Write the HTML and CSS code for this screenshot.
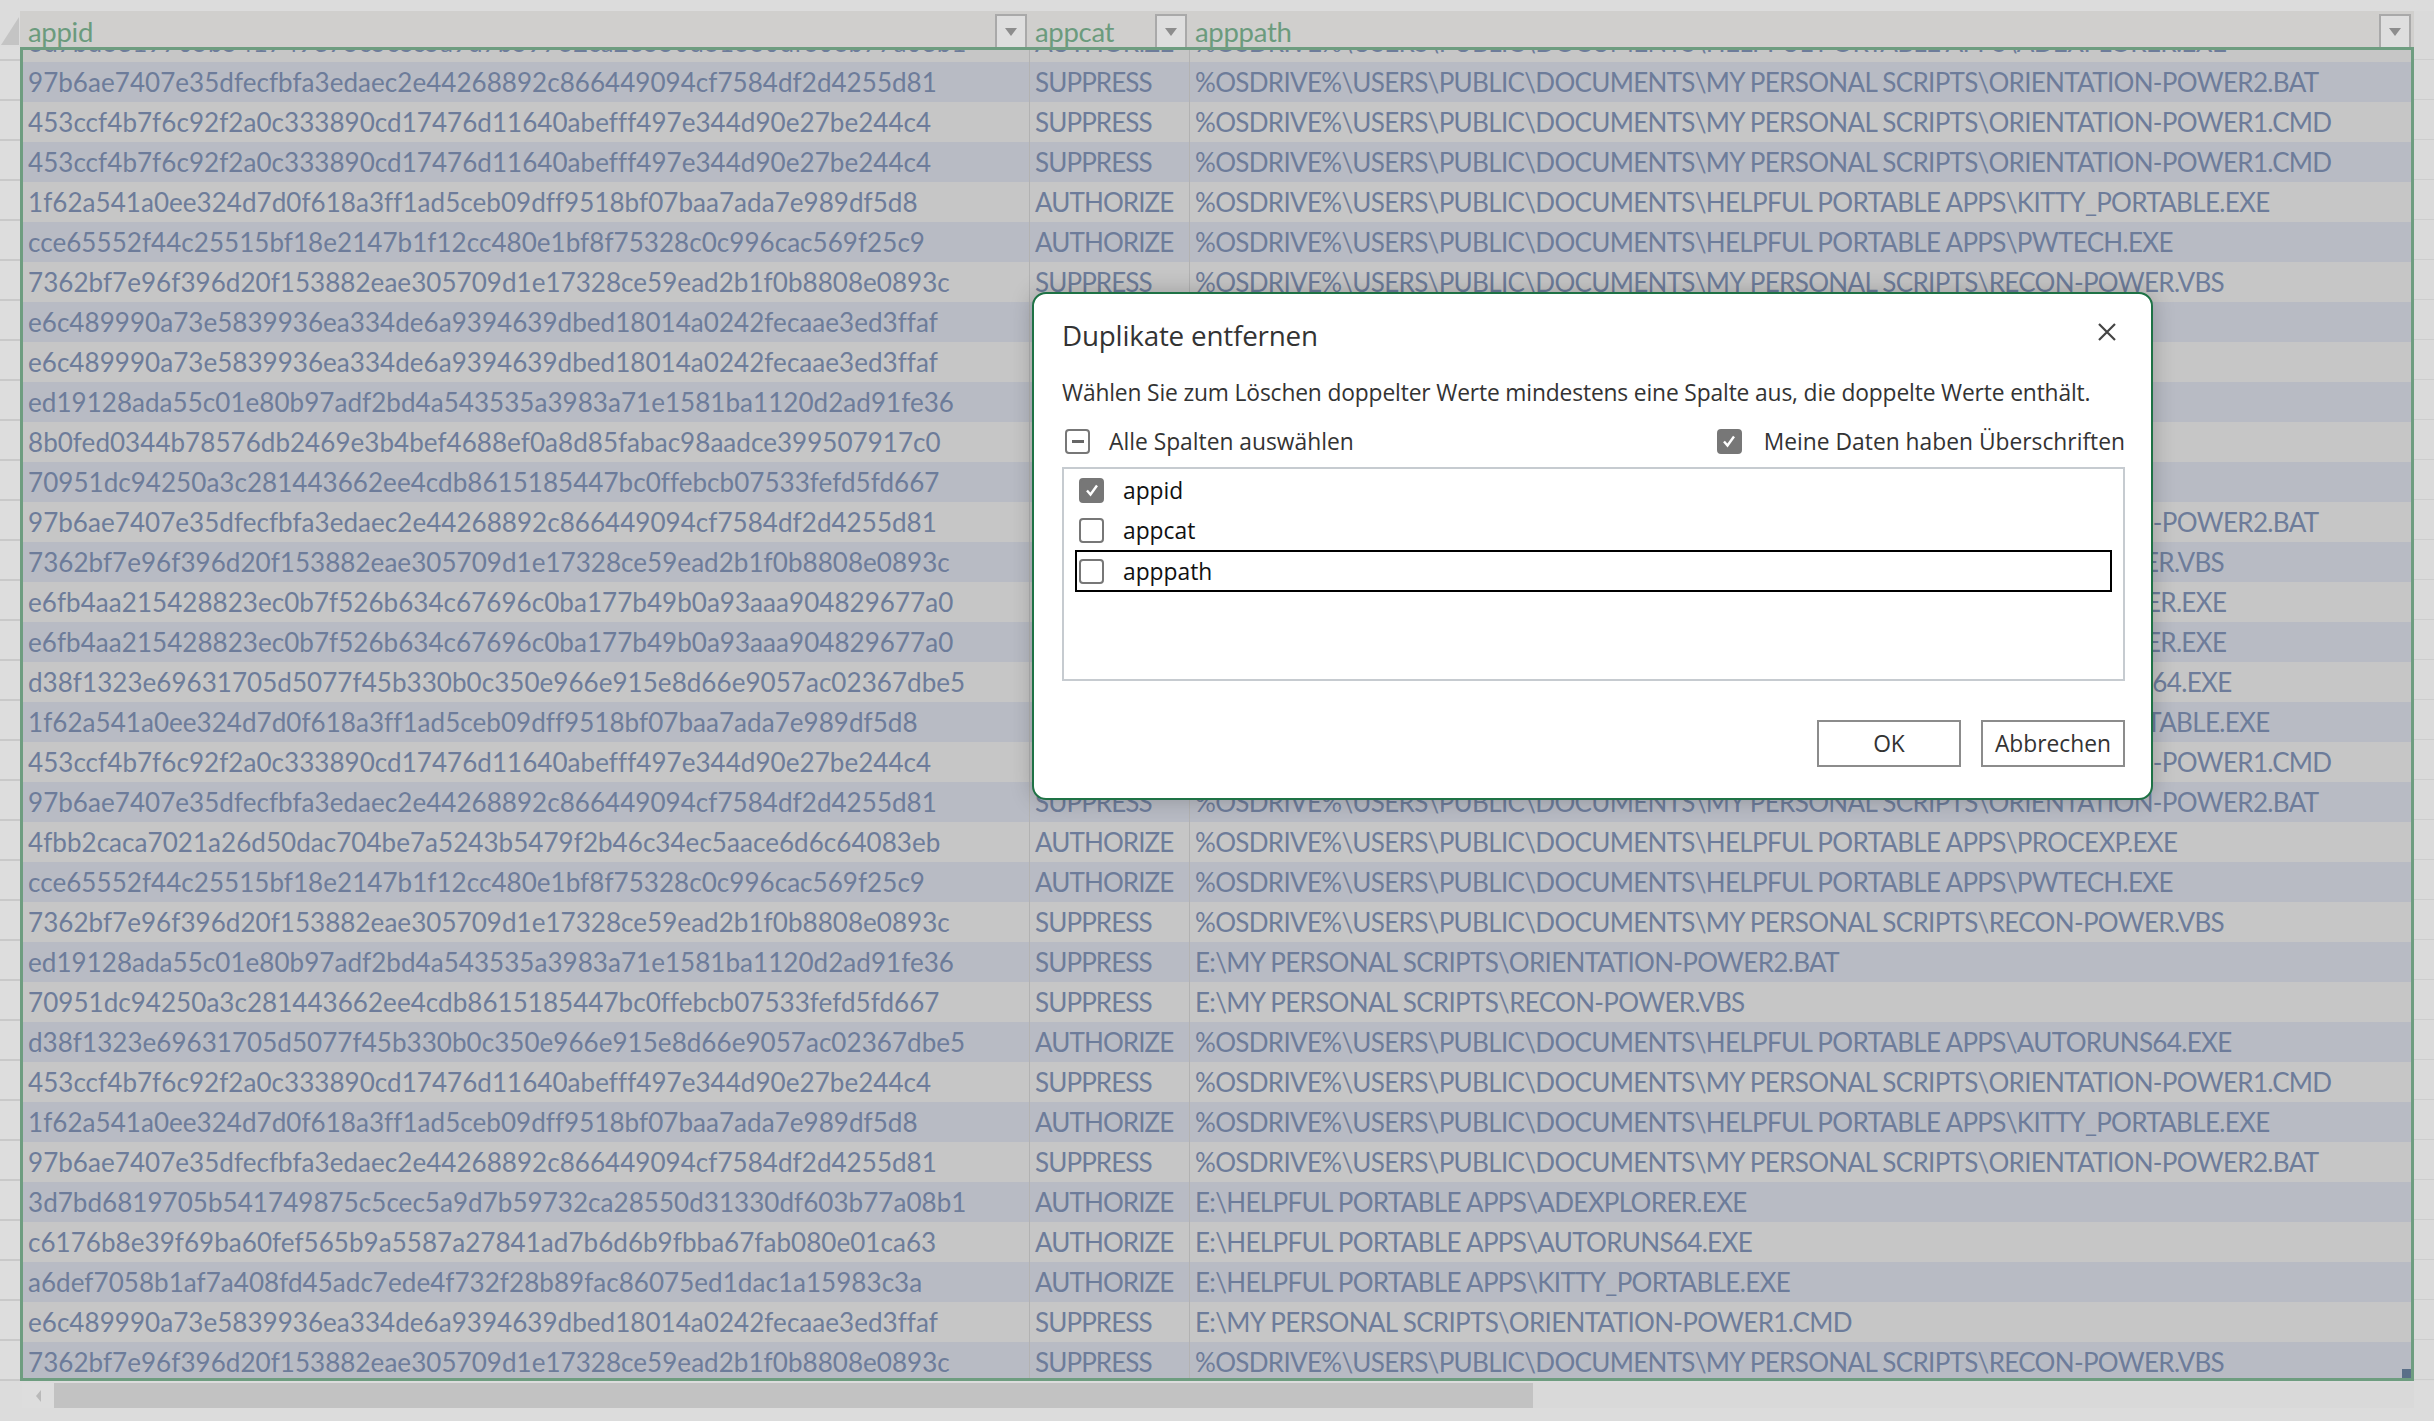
FILE: index.html
```html
<!DOCTYPE html>
<html lang="de">
<head>
<meta charset="utf-8">
<title>Duplikate entfernen</title>
<link rel="stylesheet" href="styles.css">
</head>
<body>
<div class="app">
  <div class="topstrip"></div>
  <div class="sheet">
    <div class="gutter">
      <div class="corner"><div class="corner-tri"></div></div>
      <div class="rowheads" id="rowheads"></div>
    </div>
    <div class="table">
      <div class="thead">
        <div class="th col-id"><span class="th-label">appid</span><span class="filter"><span class="tri"></span></span></div>
        <div class="th col-cat"><span class="th-label">appcat</span><span class="filter"><span class="tri"></span></span></div>
        <div class="th col-path"><span class="th-label">apppath</span><span class="filter"><span class="tri"></span></span></div>
      </div>
      <div class="tbody">
        <div class="rows" id="rows"></div>
        <div class="handle"></div>
      </div>
    </div>
    <div class="rightpad" id="rightpad"></div>
  </div>
  <div class="hscroll">
    <div class="hs-arrow"></div>
    <div class="hs-track"><div class="hs-thumb"></div></div>
  </div>

  <div class="dialog" role="dialog">
    <div class="dlg-head">
      <div class="dlg-title">Duplikate entfernen</div>
      <div class="dlg-close">
        <svg width="20" height="20" viewBox="0 0 20 20"><path d="M2 2 L18 18 M18 2 L2 18" stroke="#444" stroke-width="2.2" fill="none"/></svg>
      </div>
    </div>
    <div class="dlg-text">Wählen Sie zum Löschen doppelter Werte mindestens eine Spalte aus, die doppelte Werte enthält.</div>
    <div class="dlg-opts">
      <label class="opt"><span class="cb cb-ind"><span class="minus"></span></span><span>Alle Spalten auswählen</span></label>
      <label class="opt opt-right"><span class="cb cb-on"><svg width="16" height="16" viewBox="0 0 16 16"><path d="M3 8.5 L6.5 12.5 L13 3.5" stroke="#fff" stroke-width="2.4" fill="none"/></svg></span><span>Meine Daten haben Überschriften</span></label>
    </div>
    <div class="dlg-list">
      <div class="item"><span class="cb cb-on"><svg width="16" height="16" viewBox="0 0 16 16"><path d="M3 8.5 L6.5 12.5 L13 3.5" stroke="#fff" stroke-width="2.4" fill="none"/></svg></span><span>appid</span></div>
      <div class="item"><span class="cb"></span><span>appcat</span></div>
      <div class="item focus"><span class="cb"></span><span>apppath</span></div>
    </div>
    <div class="dlg-buttons">
      <button class="btn">OK</button>
      <button class="btn">Abbrechen</button>
    </div>
  </div>
</div>
<script>
const P = "%OSDRIVE%\\USERS\\PUBLIC\\DOCUMENTS\\";
const MPS = P + "MY PERSONAL SCRIPTS\\";
const HPA = P + "HELPFUL PORTABLE APPS\\";
const H = {
  a97: "97b6ae7407e35dfecfbfa3edaec2e44268892c866449094cf7584df2d4255d81",
  a453: "453ccf4b7f6c92f2a0c333890cd17476d11640abefff497e344d90e27be244c4",
  a1f6: "1f62a541a0ee324d7d0f618a3ff1ad5ceb09dff9518bf07baa7ada7e989df5d8",
  acce: "cce65552f44c25515bf18e2147b1f12cc480e1bf8f75328c0c996cac569f25c9",
  a736: "7362bf7e96f396d20f153882eae305709d1e17328ce59ead2b1f0b8808e0893c",
  ae6c: "e6c489990a73e5839936ea334de6a9394639dbed18014a0242fecaae3ed3ffaf",
  aed1: "ed19128ada55c01e80b97adf2bd4a543535a3983a71e1581ba1120d2ad91fe36",
  a8b0: "8b0fed0344b78576db2469e3b4bef4688ef0a8d85fabac98aadce399507917c0",
  a709: "70951dc94250a3c281443662ee4cdb8615185447bc0ffebcb07533fefd5fd667",
  ae6f: "e6fb4aa215428823ec0b7f526b634c67696c0ba177b49b0a93aaa904829677a0",
  ad38: "d38f1323e69631705d5077f45b330b0c350e966e915e8d66e9057ac02367dbe5",
  a4fb: "4fbb2caca7021a26d50dac704be7a5243b5479f2b46c34ec5aace6d6c64083eb",
  a3d7: "3d7bd6819705b541749875c5cec5a9d7b59732ca28550d31330df603b77a08b1",
  ac61: "c6176b8e39f69ba60fef565b9a5587a27841ad7b6d6b9fbba67fab080e01ca63",
  aa6d: "a6def7058b1af7a408fd45adc7ede4f732f28b89fac86075ed1dac1a15983c3a"
};
const rows = [
  [H.a3d7, "AUTHORIZE", HPA + "ADEXPLORER.EXE"],
  [H.a97, "SUPPRESS", MPS + "ORIENTATION-POWER2.BAT"],
  [H.a453, "SUPPRESS", MPS + "ORIENTATION-POWER1.CMD"],
  [H.a453, "SUPPRESS", MPS + "ORIENTATION-POWER1.CMD"],
  [H.a1f6, "AUTHORIZE", HPA + "KITTY_PORTABLE.EXE"],
  [H.acce, "AUTHORIZE", HPA + "PWTECH.EXE"],
  [H.a736, "SUPPRESS", MPS + "RECON-POWER.VBS"],
  [H.ae6c, "SUPPRESS", "E:\\MY PERSONAL SCRIPTS\\ORIENTATION-POWER1.CMD"],
  [H.ae6c, "SUPPRESS", "E:\\MY PERSONAL SCRIPTS\\ORIENTATION-POWER1.CMD"],
  [H.aed1, "SUPPRESS", "E:\\MY PERSONAL SCRIPTS\\ORIENTATION-POWER2.BAT"],
  [H.a8b0, "AUTHORIZE", "E:\\HELPFUL PORTABLE APPS\\PROCEXP.EXE"],
  [H.a709, "SUPPRESS", "E:\\MY PERSONAL SCRIPTS\\RECON-POWER.VBS"],
  [H.a97, "SUPPRESS", MPS + "ORIENTATION-POWER2.BAT"],
  [H.a736, "SUPPRESS", MPS + "RECON-POWER.VBS"],
  [H.ae6f, "AUTHORIZE", HPA + "ADEXPLORER.EXE"],
  [H.ae6f, "AUTHORIZE", HPA + "ADEXPLORER.EXE"],
  [H.ad38, "AUTHORIZE", HPA + "AUTORUNS64.EXE"],
  [H.a1f6, "AUTHORIZE", HPA + "KITTY_PORTABLE.EXE"],
  [H.a453, "SUPPRESS", MPS + "ORIENTATION-POWER1.CMD"],
  [H.a97, "SUPPRESS", MPS + "ORIENTATION-POWER2.BAT"],
  [H.a4fb, "AUTHORIZE", HPA + "PROCEXP.EXE"],
  [H.acce, "AUTHORIZE", HPA + "PWTECH.EXE"],
  [H.a736, "SUPPRESS", MPS + "RECON-POWER.VBS"],
  [H.aed1, "SUPPRESS", "E:\\MY PERSONAL SCRIPTS\\ORIENTATION-POWER2.BAT"],
  [H.a709, "SUPPRESS", "E:\\MY PERSONAL SCRIPTS\\RECON-POWER.VBS"],
  [H.ad38, "AUTHORIZE", HPA + "AUTORUNS64.EXE"],
  [H.a453, "SUPPRESS", MPS + "ORIENTATION-POWER1.CMD"],
  [H.a1f6, "AUTHORIZE", HPA + "KITTY_PORTABLE.EXE"],
  [H.a97, "SUPPRESS", MPS + "ORIENTATION-POWER2.BAT"],
  [H.a3d7, "AUTHORIZE", "E:\\HELPFUL PORTABLE APPS\\ADEXPLORER.EXE"],
  [H.ac61, "AUTHORIZE", "E:\\HELPFUL PORTABLE APPS\\AUTORUNS64.EXE"],
  [H.aa6d, "AUTHORIZE", "E:\\HELPFUL PORTABLE APPS\\KITTY_PORTABLE.EXE"],
  [H.ae6c, "SUPPRESS", "E:\\MY PERSONAL SCRIPTS\\ORIENTATION-POWER1.CMD"],
  [H.a736, "SUPPRESS", MPS + "RECON-POWER.VBS"]
];
const rc = document.getElementById("rows");
const rh = document.getElementById("rowheads");
const rp = document.getElementById("rightpad");
rows.forEach((r, i) => {
  const d = document.createElement("div");
  d.className = "row " + (i % 2 ? "band" : "plain");
  r.forEach((t, j) => {
    const c = document.createElement("div");
    c.className = "td " + ["col-id", "col-cat", "col-path"][j];
    c.textContent = t;
    d.appendChild(c);
  });
  rc.appendChild(d);
  const h = document.createElement("div");
  h.className = "rh";
  rh.appendChild(h);
  const p = document.createElement("div");
  p.className = "rp";
  rp.appendChild(p);
});
</script>
</body>
</html>
```
FILE: styles.css
```css
* { box-sizing: border-box; }
html, body { margin: 0; padding: 0; }
body {
  width: 2434px;
  height: 1421px;
  overflow: hidden;
  background: #dcdcdc;
  font-family: "Lato", "Liberation Sans", sans-serif;
}
.app {
  position: relative;
  width: 2434px;
  height: 1421px;
  display: flex;
  flex-direction: column;
}
.topstrip { height: 11px; background: #dcdcdc; flex: none; }

.sheet {
  height: 1370px;
  flex: none;
  display: flex;
  overflow: hidden;
}
.gutter {
  width: 20px;
  flex: none;
  display: flex;
  flex-direction: column;
  background: #dddddd;
}
.corner {
  height: 36px;
  flex: none;
  position: relative;
  background: #dcdcdc;
}
.corner-tri {
  position: absolute;
  right: 1px;
  bottom: 2px;
  width: 0; height: 0;
  border-left: 18px solid transparent;
  border-bottom: 28px solid #c4c4c4;
}
.rowheads { overflow: hidden; flex: 1; display: flex; flex-direction: column; padding-top: 1px; }
.rowheads .rh { height: 40px; flex: none; border-bottom: 2px solid #c9c9c9; }
.rowheads .rh:first-child { height: 13px; }

.table {
  width: 2394px;
  flex: none;
  display: flex;
  flex-direction: column;
}
.thead {
  height: 36px;
  flex: none;
  display: flex;
  background: #d0cfcd;
  padding-left: 3px;
  padding-right: 3px;
  overflow: hidden;
}
.th {
  display: flex;
  align-items: flex-end;
  justify-content: space-between;
  font-size: 27.5px;
  color: #6b9b7d;
  padding-left: 5px;
  padding-right: 2px;
}
.th.col-cat, .th.col-path { border-left: 1px solid transparent; padding-left: 5px; }
.th.col-path { padding-right: 0; }
.th-label { line-height: 30px; letter-spacing: -0.3px; }
.filter {
  width: 32px;
  height: 33px;
  background: #dedede;
  border: 2px solid #a9a9a9;
  border-bottom: none;
  display: flex;
  align-items: center;
  justify-content: center;
  flex: none;
}
.tri {
  width: 0; height: 0;
  border-left: 6px solid transparent;
  border-right: 6px solid transparent;
  border-top: 8px solid #8d8d8d;
}
.col-id { width: 1006px; flex: none; }
.col-cat { width: 160px; flex: none; }
.col-path { flex: 1; min-width: 0; }

.tbody {
  position: relative;
  flex: 1;
  border: 3px solid #6e9d80;
  overflow: hidden;
  background: #c6c6c6;
}
.rows {
  display: flex;
  flex-direction: column;
  margin-top: -28px;
}
.row {
  height: 40px;
  flex: none;
  display: flex;
  font-size: 26px;
  color: #6d7c9a;
  line-height: 40px;
}
.row.plain { background: #c6c6c6; }
.row.band { background: #b8bbc4; }
.td {
  white-space: nowrap;
  overflow: hidden;
  padding-left: 5px;
  padding-top: 0;
  letter-spacing: 0.05px;
}
.td.col-cat, .td.col-path { border-left: 1px solid #b2b2b2; }
.td.col-path { letter-spacing: -0.67px; }
.td.col-cat { letter-spacing: -0.9px; }
.handle {
  position: absolute;
  right: 0;
  bottom: 0;
  width: 9px;
  height: 9px;
  background: #5a6f88;
}

.rightpad {
  flex: 1;
  display: flex;
  flex-direction: column;
  background: #dadada;
  padding-top: 36px;
}
.rightpad .rp { height: 40px; flex: none; border-bottom: 1px solid #cdcdcd; }
.rightpad .rp:first-child { height: 13px; }

.hscroll {
  flex: none;
  height: 40px;
  display: flex;
  padding-top: 2px;
  padding-left: 22px;
  background: #dcdcdc;
}
.hs-arrow {
  width: 32px;
  height: 25px;
  display: flex;
  align-items: center;
  justify-content: center;
  background: #dddddd;
}
.hs-arrow::before {
  content: "";
  width: 0; height: 0;
  border-top: 6px solid transparent;
  border-bottom: 6px solid transparent;
  border-right: 5px solid #b9b9b9;
}
.hs-track {
  width: 2360px;
  height: 25px;
  background: #d9d9d9;
}
.hs-thumb {
  width: 1479px;
  height: 25px;
  background: #c2c2c2;
}

/* dialog */
.dialog {
  position: absolute;
  left: 1032px;
  top: 292px;
  width: 1121px;
  height: 508px;
  background: #fff;
  border: 2px solid #1e7245;
  border-radius: 14px;
  box-shadow: 0 0 22px rgba(0,0,0,0.22);
  padding: 21px 26px 0 28px;
  font-family: "Open Sans", "Noto Sans", sans-serif;
  color: #333;
  display: flex;
  flex-direction: column;
}
.dlg-head {
  display: flex;
  justify-content: space-between;
  align-items: center;
  height: 40px;
}
.dlg-title {
  font-size: 27.8px;
  line-height: 40px;
  color: #333;
  letter-spacing: -0.2px;
}
.dlg-close {
  width: 36px;
  height: 36px;
  display: flex;
  align-items: center;
  justify-content: center;
  margin-top: -6px;
}
.dlg-text {
  margin-top: 22px;
  font-size: 22.8px;
  line-height: 32px;
  color: #333;
  letter-spacing: -0.15px;
  white-space: nowrap;
}
.dlg-opts {
  margin-top: 17px;
  height: 30px;
  display: flex;
  justify-content: space-between;
  align-items: center;
  font-size: 22.8px;
  color: #333;
}
.opt {
  display: flex;
  align-items: center;
  gap: 19px;
}
.opt:first-child { padding-left: 3px; }
.opt-right { gap: 22px; }
.cb {
  width: 25px;
  height: 25px;
  border: 2px solid #777;
  border-radius: 4px;
  background: #fff;
  display: flex;
  align-items: center;
  justify-content: center;
  flex: none;
}
.cb-on { background: #777; border-color: #777; }
.cb-ind .minus {
  width: 12px;
  height: 3px;
  background: #666;
}
.dlg-list {
  margin-top: 11px;
  height: 214px;
  border: 2px solid #c6cbd0;
  padding: 1px 11px 0 11px;
  display: flex;
  flex-direction: column;
}
.item {
  height: 40px;
  display: flex;
  align-items: center;
  gap: 19px;
  padding-left: 2px;
  border: 2px solid transparent;
  font-size: 22.8px;
  color: #111;
}
.item.focus { border-color: #000; height: 42px; }
.dlg-buttons {
  margin-top: 39px;
  display: flex;
  justify-content: flex-end;
  gap: 20px;
}
.btn {
  width: 144px;
  height: 47px;
  background: #fff;
  border: 2px solid #8c8c8c;
  font-family: "Open Sans", "Noto Sans", sans-serif;
  font-size: 22.8px;
  color: #333;
  padding: 0;
}
```
